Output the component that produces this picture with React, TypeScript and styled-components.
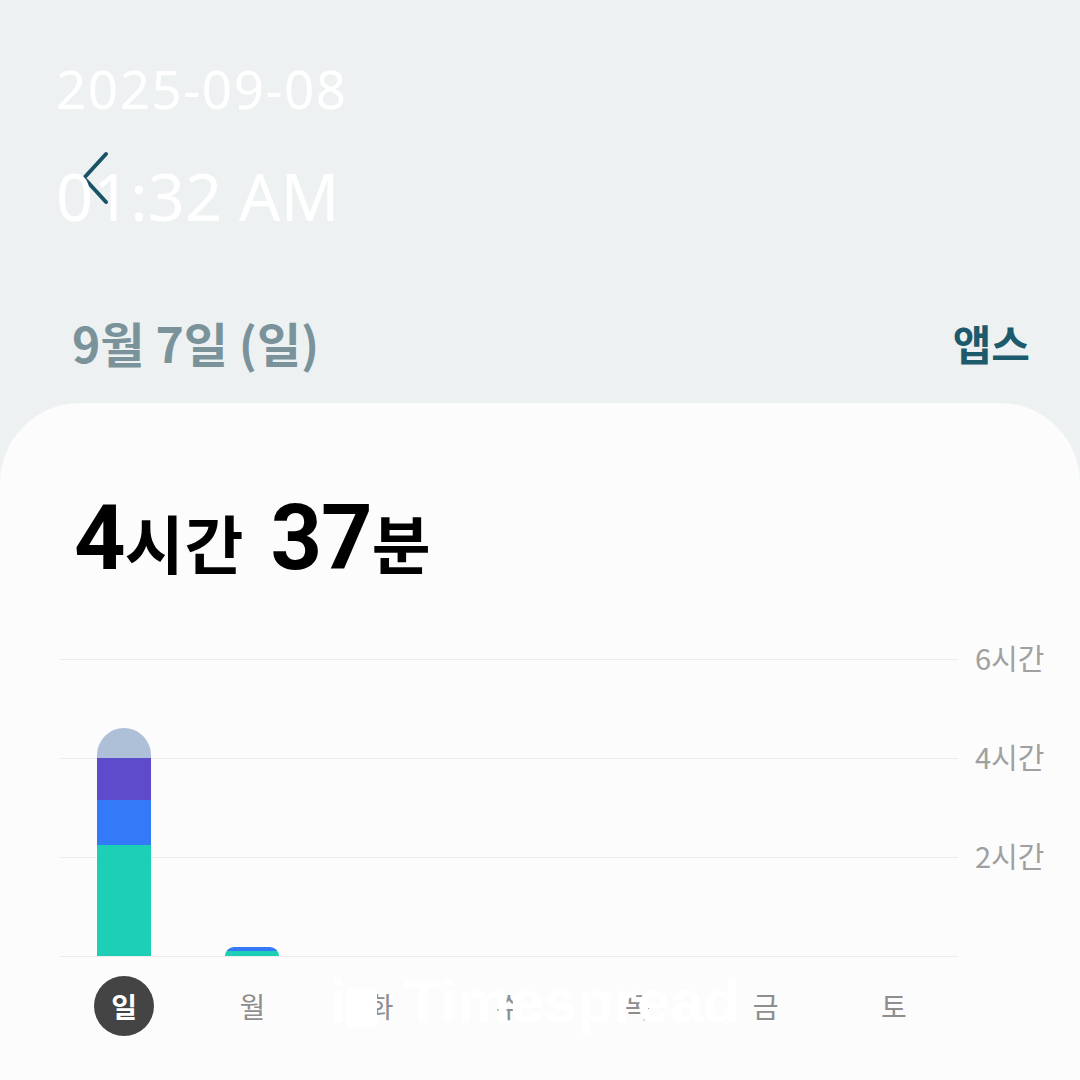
import React from 'react'
import styled, {createGlobalStyle} from 'styled-components'

const KR = `"Noto Sans CJK KR", "Noto Sans", sans-serif`
const NUM = `Roboto, "Noto Sans CJK KR", sans-serif`

const GlobalStyle = createGlobalStyle`
  body {
    margin: 0;
    background: #edf1f2;
    font-family: ${KR};
  }
`

interface Segment {
  color: string
  height: number
}

interface DayData {
  label: string
  segments: Segment[]
}

const days: DayData[] = [
  {
    label: '일',
    segments: [
      {color: '#1dcfb5', height: 111},
      {color: '#3479f7', height: 45},
      {color: '#5e4bcc', height: 42},
      {color: '#aebfd8', height: 30},
    ],
  },
  {
    label: '월',
    segments: [
      {color: '#1dcfb5', height: 5},
      {color: '#3479f7', height: 4},
    ],
  },
  {label: '화', segments: []},
  {label: '수', segments: []},
  {label: '목', segments: []},
  {label: '금', segments: []},
  {label: '토', segments: []},
]

const axis = ['6시간', '4시간', '2시간']

const App: React.FC = () => {
  return (
    <>
      <GlobalStyle />
      <Screen>
        <Header>
          <BackButton aria-label="back">
            <svg width="40" height="56" viewBox="0 0 40 56">
              <path d="M30 4 L8 28 L30 52" fill="none" stroke="#1b5366" strokeWidth="4" strokeLinecap="round" strokeLinejoin="round" />
            </svg>
          </BackButton>
          <DateRow>
            <DateTitle>9월 7일 (일)</DateTitle>
            <AppsLink>앱스</AppsLink>
          </DateRow>
        </Header>

        <Card>
          <Total>
            <Big>4</Big>
            <Unit>시간</Unit>
            <Gap />
            <Big>37</Big>
            <Unit>분</Unit>
          </Total>

          <Chart>
            <PlotColumn>
              <Plot>
                {days.map((d) => (
                  <BarSlot key={d.label}>
                    {d.segments.length > 0 && (
                      <Bar>
                        {d.segments.map((s, i) => (
                          <BarSegment key={i} style={{height: s.height, background: s.color}} />
                        ))}
                      </Bar>
                    )}
                  </BarSlot>
                ))}
              </Plot>
              <DayRow>
                {days.map((d, i) => (
                  <DayCell key={d.label}>
                    <DayLabel $active={i === 0}>{d.label}</DayLabel>
                  </DayCell>
                ))}
              </DayRow>
            </PlotColumn>
            <AxisColumn>
              {axis.map((a) => (
                <AxisTick key={a}>
                  <AxisLabel>{a}</AxisLabel>
                </AxisTick>
              ))}
            </AxisColumn>
          </Chart>
        </Card>

        <Stamp>
          <StampDate>2025-09-08</StampDate>
          <StampTime>01:32 AM</StampTime>
        </Stamp>

        <Watermark>
          <MarkI>i</MarkI>
          <MarkBlock />
          <MarkText>Timespread</MarkText>
        </Watermark>
      </Screen>
    </>
  )
}

const Screen = styled.div`
  position: relative;
  width: 1080px;
  height: 1080px;
  overflow: hidden;
  display: flex;
  flex-direction: column;
  background: #edf1f2;
`

const Header = styled.div`
  display: flex;
  flex-direction: column;
  height: 403px;
  padding-top: 150px;
  box-sizing: border-box;
`

const BackButton = styled.div`
  width: 40px;
  height: 56px;
  margin-left: 76px;
  display: flex;
  align-items: center;
`

const DateRow = styled.div`
  display: flex;
  justify-content: space-between;
  align-items: center;
  margin-top: 104px;
  padding: 0 50px 0 72px;
  height: 64px;
`

const DateTitle = styled.div`
  font-family: ${KR};
  font-size: 48px;
  font-weight: 700;
  color: #7a939b;
`

const AppsLink = styled.div`
  font-family: ${KR};
  font-size: 42px;
  font-weight: 700;
  color: #1c5a6c;
`

const Card = styled.div`
  flex: 1;
  background: #fcfcfc;
  border-radius: 80px 80px 0 0;
  padding: 86px 0 0 60px;
  display: flex;
  flex-direction: column;
`

const Total = styled.div`
  display: flex;
  align-items: baseline;
  padding-left: 14px;
  height: 100px;
  line-height: 100px;
  color: #000;
`

const Big = styled.span`
  font-family: ${NUM};
  font-size: 90px;
  font-weight: 700;
  letter-spacing: -1px;
`

const Unit = styled.span`
  font-family: ${KR};
  font-size: 64px;
  font-weight: 700;
  letter-spacing: 1px;
`

const Gap = styled.span`
  width: 26px;
`

const Chart = styled.div`
  display: flex;
  margin-top: 70px;
`

const PlotColumn = styled.div`
  width: 898px;
  display: flex;
  flex-direction: column;
`

const Plot = styled.div`
  height: 298px;
  display: flex;
  align-items: flex-end;
  background-image: repeating-linear-gradient(
    to bottom,
    #ececec 0,
    #ececec 1px,
    transparent 1px,
    transparent 99px
  );
`

const BarSlot = styled.div`
  flex: 1;
  display: flex;
  justify-content: center;
  align-items: flex-end;
  height: 100%;
`

const Bar = styled.div`
  width: 54px;
  display: flex;
  flex-direction: column-reverse;
  border-radius: 27px 27px 0 0;
  overflow: hidden;
  margin-bottom: 1px;
`

const BarSegment = styled.div`
  width: 100%;
`

const DayRow = styled.div`
  display: flex;
  margin-top: 19px;
`

const DayCell = styled.div`
  flex: 1;
  display: flex;
  justify-content: center;
`

const DayLabel = styled.div<{$active: boolean}>`
  width: 60px;
  height: 60px;
  border-radius: 50%;
  display: flex;
  align-items: center;
  justify-content: center;
  font-family: ${KR};
  font-size: 28px;
  font-weight: ${(p) => (p.$active ? 700 : 400)};
  color: ${(p) => (p.$active ? '#ffffff' : '#8e8e8e')};
  background: ${(p) => (p.$active ? '#444444' : 'transparent')};
`

const AxisColumn = styled.div`
  display: flex;
  flex-direction: column;
  margin-left: 17px;
`

const AxisTick = styled.div`
  height: 99px;
`

const AxisLabel = styled.div`
  margin-top: -22px;
  line-height: 40px;
  font-family: ${KR};
  font-size: 29px;
  color: #a0a0a0;
`

const Stamp = styled.div`
  position: absolute;
  left: 56px;
  top: 58px;
  display: flex;
  flex-direction: column;
  color: #ffffff;
  font-family: "Noto Sans", "Open Sans", sans-serif;
  pointer-events: none;
`

const StampDate = styled.div`
  font-size: 53px;
  line-height: 62px;
  letter-spacing: 1.5px;
`

const StampTime = styled.div`
  margin-top: 36px;
  font-size: 65px;
  line-height: 80px;
`

const Watermark = styled.div`
  position: absolute;
  left: 330px;
  top: 962px;
  display: flex;
  align-items: center;
  color: #ffffff;
  font-family: "Liberation Sans", Arial, sans-serif;
  font-weight: 700;
  pointer-events: none;
`

const MarkI = styled.span`
  font-size: 60px;
  line-height: 80px;
`

const MarkBlock = styled.span`
  width: 30px;
  height: 40px;
  margin-top: 12px;
  background: #ffffff;
  margin-right: 28px;
`

const MarkText = styled.span`
  font-size: 60px;
  line-height: 80px;
`

export default App
